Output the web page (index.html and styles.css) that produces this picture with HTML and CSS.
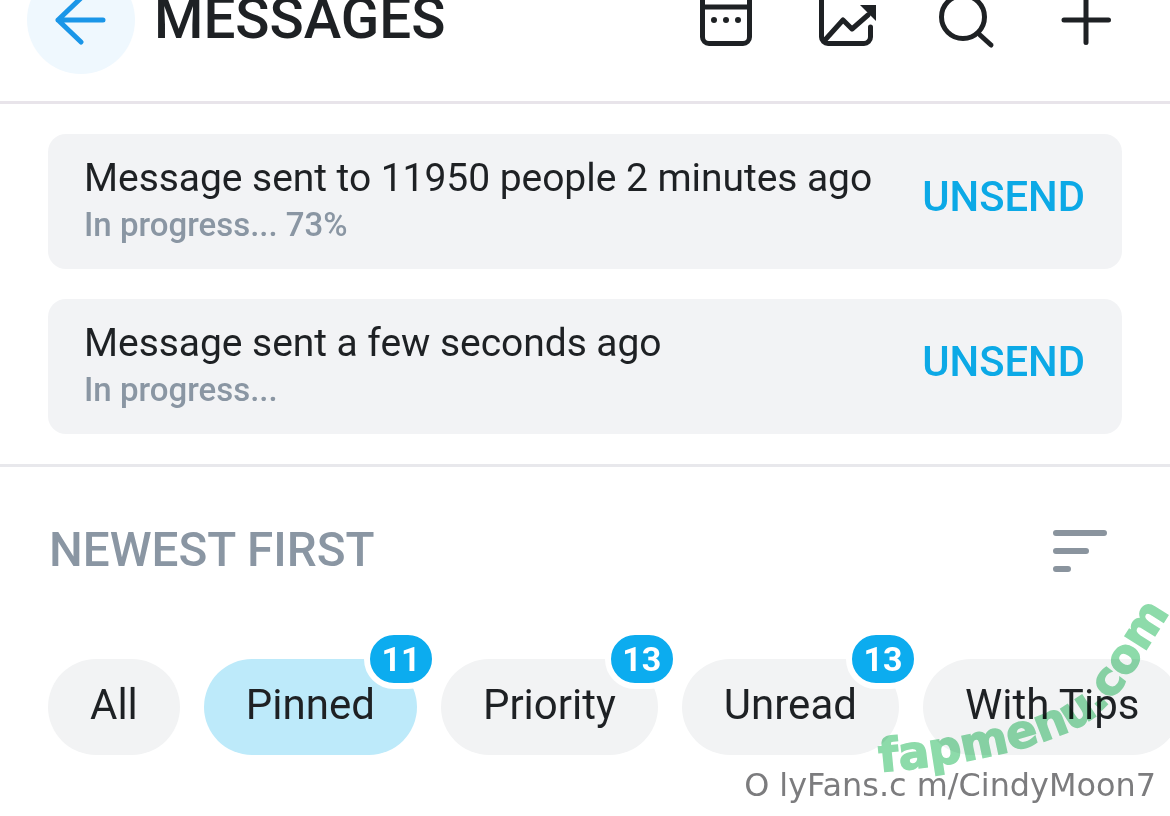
FILE: index.html
```html
<!DOCTYPE html>
<html lang="en">
<head>
<meta charset="utf-8">
<title>Messages</title>
<link rel="stylesheet" href="styles.css">
</head>
<body>
<div class="page">
  <header class="header">
    <div class="back">
      <svg class="icon" viewBox="0 0 60 60"><path class="blue" d="M7 30H52M30 8 7 30 30 52"/></svg>
    </div>
    <h1 class="title">MESSAGES</h1>
    <div class="actions">
      <svg class="icon" viewBox="0 0 60 60"><path class="ink" d="M6.500 0V47a6.500 6.500 0 0 0 6.500 6.500H47a6.500 6.500 0 0 0 6.500-6.500V0M6.500 17H53.500"/><circle class="dot" cx="18" cy="30" r="3"/><circle class="dot" cx="30" cy="30" r="3"/><circle class="dot" cx="42" cy="30" r="3"/></svg>
      <svg class="icon" viewBox="0 0 60 60"><path class="ink" d="M5.500 0V47a6.500 6.500 0 0 0 6.500 6.500H48a6.500 6.500 0 0 0 6.500-6.500V37M9 50 27 30 36 39 52 25"/><path class="dot" d="M44 15H60V31Z"/></svg>
      <svg class="icon" viewBox="0 0 60 60"><circle class="ink" cx="27" cy="27" r="21.500"/><path class="ink" d="M44 45 55 55"/></svg>
      <svg class="icon" viewBox="0 0 60 60"><path class="ink" d="M8 30H52.500M30 8V52.500"/></svg>
    </div>
  </header>

  <section class="queue">
    <div class="card">
      <div class="card-text">
        <p class="card-title">Message sent to 11950 people 2 minutes ago</p>
        <p class="card-sub">In progress... 73%</p>
      </div>
      <span class="unsend">UNSEND</span>
    </div>
    <div class="card">
      <div class="card-text">
        <p class="card-title">Message sent a few seconds ago</p>
        <p class="card-sub">In progress...</p>
      </div>
      <span class="unsend">UNSEND</span>
    </div>
  </section>

  <div class="sort">
    <h2 class="sort-label">NEWEST FIRST</h2>
    <svg class="sort-icon" viewBox="0 -1 60 48"><path d="M6 6H54M6 24H36M6 42H18"/></svg>
  </div>

  <div class="chips">
    <span class="chip">All</span>
    <span class="chip chip-active">Pinned<span class="badge">11</span></span>
    <span class="chip">Priority<span class="badge">13</span></span>
    <span class="chip">Unread<span class="badge">13</span></span>
    <span class="chip">With Tips</span>
  </div>

  <svg class="mark" viewBox="0 0 320 200">
    <defs><path id="markline" d="M10 172C90 165 165 150 212 125C245 105 262 72 290 28"/></defs>
    <text class="mark-text"><textPath href="#markline">fapmenu.com</textPath></text>
  </svg>
  <div class="credit">O lyFans.c m/CindyMoon7</div>
</div>
</body>
</html>
```
FILE: styles.css
```css
* { box-sizing: border-box; }
html, body { margin: 0; padding: 0; background: #fff; }
body { font-family: Roboto, "Liberation Sans", sans-serif; color: #1e2124; }
.page { position: relative; width: 1170px; height: 816px; overflow: hidden; }

.header {
  display: flex;
  align-items: center;
  height: 138px;
  margin-top: -34px;
  padding: 0 54px 27px 27px;
  border-bottom: 3px solid #e8e4ea;
}
.back {
  display: flex;
  align-items: center;
  justify-content: center;
  width: 108px;
  height: 108px;
  border-radius: 50%;
  background: #eff8fe;
  flex: none;
}
.title {
  margin: 0 0 2px 19px;
  font-size: 56.500px;
  font-weight: 500;
  line-height: 60px;
  white-space: nowrap;
}
.actions { display: flex; gap: 60px; margin-left: auto; }
.icon { display: block; width: 60px; height: 60px; overflow: hidden; }
.ink, .blue { fill: none; stroke-width: 5; stroke-linecap: round; stroke-linejoin: round; }
.ink { stroke: #1e2124; }
.blue { stroke: #1a96e8; }
.dot { fill: #1e2124; }

.queue {
  display: flex;
  flex-direction: column;
  gap: 30px;
  padding: 30px 48px;
  border-bottom: 3px solid #e8e8ec;
}
.card {
  display: flex;
  align-items: center;
  justify-content: space-between;
  height: 135px;
  padding: 0 37px 0 36px;
  border-radius: 18px;
  background: #f2f3f5;
}
.card-title { margin: 0; font-size: 39px; line-height: 44px; letter-spacing: -.05px; white-space: nowrap; }
.card-sub { margin: 2px 0 0; font-size: 33px; font-weight: 500; line-height: 46px; color: #8a96a3; white-space: nowrap; }
.unsend { margin-bottom: 10px; font-size: 41.800px; font-weight: 500; color: #0ca9e6; }

.sort {
  display: flex;
  align-items: center;
  justify-content: space-between;
  height: 166px;
  padding: 0 60px 0 49px;
}
.sort-label { margin: 0; font-size: 47.600px; font-weight: 500; color: #8a96a3; white-space: nowrap; }
.sort-icon { display: block; width: 60px; height: 48px; }
.sort-icon path { fill: none; stroke: #8a949e; stroke-width: 6; stroke-linecap: round; }

.chips { display: flex; gap: 24px; padding: 26px 0 0 48px; }
.chip {
  position: relative;
  flex: none;
  height: 96px;
  padding: 0 42px;
  border-radius: 48px;
  background: #f2f3f4;
  font-size: 42px;
  line-height: 92px;
  white-space: nowrap;
}
.chip-active { background: #bdeafa; }
.badge {
  position: absolute;
  top: -30px;
  right: -21px;
  width: 74px;
  height: 60px;
  border: 6px solid #fff;
  border-radius: 30px;
  background: #0cacef;
  color: #fff;
  font-size: 34px;
  font-weight: 700;
  line-height: 48px;
  text-align: center;
}

.credit {
  position: absolute;
  right: 14px;
  top: 765px;
  font-family: "DejaVu Sans", sans-serif;
  font-size: 31.900px;
  line-height: 40px;
  color: #7c7c7e;
  white-space: nowrap;
}
.mark { position: absolute; left: 870px; top: 600px; width: 320px; height: 200px; overflow: visible; mix-blend-mode: multiply; }
.mark-text { font-family: "DejaVu Sans", sans-serif; font-size: 46px; font-weight: 700; fill: #8ddbaa; stroke: #8ddbaa; stroke-width: 1.500px; }
```
